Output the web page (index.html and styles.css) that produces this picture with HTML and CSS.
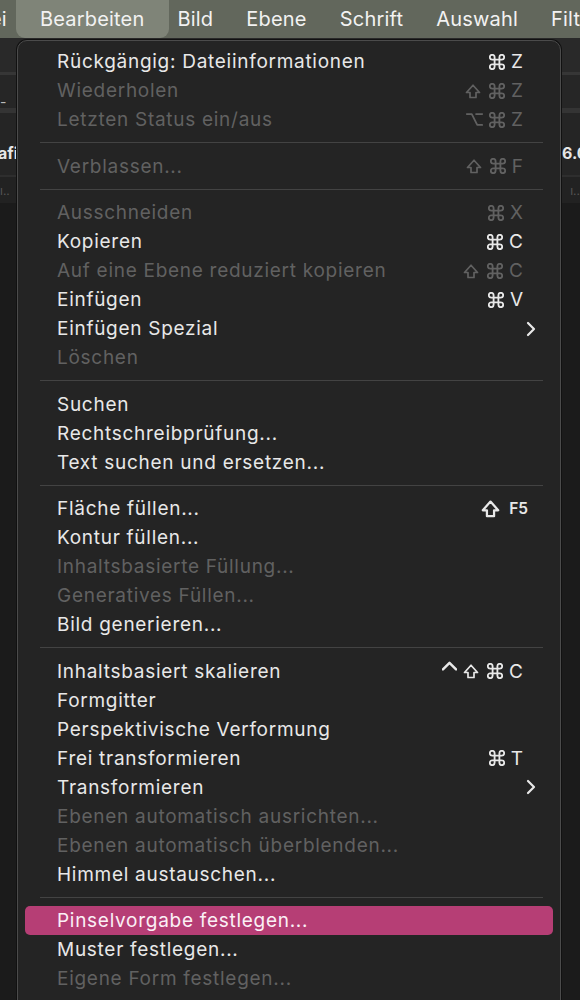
FILE: index.html
```html
<!DOCTYPE html>
<html lang="de">
<head>
<meta charset="utf-8">
<title>Bearbeiten</title>
<link rel="stylesheet" href="styles.css">
</head>
<body>
<div class="app">
  <nav class="menubar">
    <span class="mb-item first">ei</span>
    <span class="mb-item active">Bearbeiten</span>
    <span class="mb-item">Bild</span>
    <span class="mb-item">Ebene</span>
    <span class="mb-item">Schrift</span>
    <span class="mb-item">Auswahl</span>
    <span class="mb-item">Filter</span>
  </nav>
  <div class="bar bar1"></div>
  <div class="bar bar2"><span class="dash">-</span></div>
  <div class="bar bar3"><span class="bold">afi</span><span class="bold edge">6.0</span></div>
  <div class="bar bar4"><span class="ticks">ı..</span><span class="ticks">ı..</span></div>
  <div class="workspace"></div>
</div>

<div class="menu">
  <div class="item"><span class="label">Rückgängig: Dateiinformationen</span><span class="keys"><svg class="k cmd" viewBox="2 2 20 20"><path d="M15 6v12a3 3 0 1 0 3-3H6a3 3 0 1 0 3 3V6a3 3 0 1 0-3 3h12a3 3 0 1 0-3-3"/></svg><span class="ch">Z</span></span><span class="sub"></span></div>
  <div class="item off"><span class="label">Wiederholen</span><span class="keys"><svg class="k shift" viewBox="0 0 16 16"><path d="M5 14.5V9.5H1.5L8 2.2l6.5 7.3H11v5z"/></svg><svg class="k cmd" viewBox="2 2 20 20"><path d="M15 6v12a3 3 0 1 0 3-3H6a3 3 0 1 0 3 3V6a3 3 0 1 0-3 3h12a3 3 0 1 0-3-3"/></svg><span class="ch">Z</span></span><span class="sub"></span></div>
  <div class="item off"><span class="label">Letzten Status ein/aus</span><span class="keys"><svg class="k opt" viewBox="1 1 22 22"><path d="M2 5h6.5l7 14H22M14 5h8"/></svg><svg class="k cmd" viewBox="2 2 20 20"><path d="M15 6v12a3 3 0 1 0 3-3H6a3 3 0 1 0 3 3V6a3 3 0 1 0-3 3h12a3 3 0 1 0-3-3"/></svg><span class="ch">Z</span></span><span class="sub"></span></div>
  <div class="sep"></div>
  <div class="item off"><span class="label">Verblassen...</span><span class="keys"><svg class="k shift" viewBox="0 0 16 16"><path d="M5 14.5V9.5H1.5L8 2.2l6.5 7.3H11v5z"/></svg><svg class="k cmd" viewBox="2 2 20 20"><path d="M15 6v12a3 3 0 1 0 3-3H6a3 3 0 1 0 3 3V6a3 3 0 1 0-3 3h12a3 3 0 1 0-3-3"/></svg><span class="ch">F</span></span><span class="sub"></span></div>
  <div class="sep"></div>
  <div class="item off"><span class="label">Ausschneiden</span><span class="keys"><svg class="k cmd" viewBox="2 2 20 20"><path d="M15 6v12a3 3 0 1 0 3-3H6a3 3 0 1 0 3 3V6a3 3 0 1 0-3 3h12a3 3 0 1 0-3-3"/></svg><span class="ch">X</span></span><span class="sub"></span></div>
  <div class="item"><span class="label">Kopieren</span><span class="keys"><svg class="k cmd" viewBox="2 2 20 20"><path d="M15 6v12a3 3 0 1 0 3-3H6a3 3 0 1 0 3 3V6a3 3 0 1 0-3 3h12a3 3 0 1 0-3-3"/></svg><span class="ch">C</span></span><span class="sub"></span></div>
  <div class="item off"><span class="label">Auf eine Ebene reduziert kopieren</span><span class="keys"><svg class="k shift" viewBox="0 0 16 16"><path d="M5 14.5V9.5H1.5L8 2.2l6.5 7.3H11v5z"/></svg><svg class="k cmd" viewBox="2 2 20 20"><path d="M15 6v12a3 3 0 1 0 3-3H6a3 3 0 1 0 3 3V6a3 3 0 1 0-3 3h12a3 3 0 1 0-3-3"/></svg><span class="ch">C</span></span><span class="sub"></span></div>
  <div class="item"><span class="label">Einfügen</span><span class="keys"><svg class="k cmd" viewBox="2 2 20 20"><path d="M15 6v12a3 3 0 1 0 3-3H6a3 3 0 1 0 3 3V6a3 3 0 1 0-3 3h12a3 3 0 1 0-3-3"/></svg><span class="ch">V</span></span><span class="sub"></span></div>
  <div class="item"><span class="label">Einfügen Spezial</span><span class="keys"></span><span class="sub"><svg class="chev" viewBox="0 0 10 16"><path d="M2 2l6 6-6 6"/></svg></span></div>
  <div class="item off"><span class="label">Löschen</span><span class="keys"></span><span class="sub"></span></div>
  <div class="sep"></div>
  <div class="item"><span class="label">Suchen</span><span class="keys"></span><span class="sub"></span></div>
  <div class="item"><span class="label">Rechtschreibprüfung...</span><span class="keys"></span><span class="sub"></span></div>
  <div class="item"><span class="label">Text suchen und ersetzen...</span><span class="keys"></span><span class="sub"></span></div>
  <div class="sep"></div>
  <div class="item"><span class="label">Fläche füllen...</span><span class="keys fkey"><svg class="k shift big" viewBox="0 0 16 16"><path d="M5 14.5V9.5H1.5L8 2.2l6.5 7.3H11v5z"/></svg><span class="ch small">F5</span></span><span class="sub"></span></div>
  <div class="item"><span class="label">Kontur füllen...</span><span class="keys"></span><span class="sub"></span></div>
  <div class="item off"><span class="label">Inhaltsbasierte Füllung...</span><span class="keys"></span><span class="sub"></span></div>
  <div class="item off"><span class="label">Generatives Füllen...</span><span class="keys"></span><span class="sub"></span></div>
  <div class="item"><span class="label">Bild generieren...</span><span class="keys"></span><span class="sub"></span></div>
  <div class="sep"></div>
  <div class="item"><span class="label">Inhaltsbasiert skalieren</span><span class="keys"><svg class="k ctrl" viewBox="4 4 16 16"><path d="M5 13l7-7 7 7"/></svg><svg class="k shift" viewBox="0 0 16 16"><path d="M5 14.5V9.5H1.5L8 2.2l6.5 7.3H11v5z"/></svg><svg class="k cmd" viewBox="2 2 20 20"><path d="M15 6v12a3 3 0 1 0 3-3H6a3 3 0 1 0 3 3V6a3 3 0 1 0-3 3h12a3 3 0 1 0-3-3"/></svg><span class="ch">C</span></span><span class="sub"></span></div>
  <div class="item"><span class="label">Formgitter</span><span class="keys"></span><span class="sub"></span></div>
  <div class="item"><span class="label">Perspektivische Verformung</span><span class="keys"></span><span class="sub"></span></div>
  <div class="item"><span class="label">Frei transformieren</span><span class="keys"><svg class="k cmd" viewBox="2 2 20 20"><path d="M15 6v12a3 3 0 1 0 3-3H6a3 3 0 1 0 3 3V6a3 3 0 1 0-3 3h12a3 3 0 1 0-3-3"/></svg><span class="ch">T</span></span><span class="sub"></span></div>
  <div class="item"><span class="label">Transformieren</span><span class="keys"></span><span class="sub"><svg class="chev" viewBox="0 0 10 16"><path d="M2 2l6 6-6 6"/></svg></span></div>
  <div class="item off"><span class="label">Ebenen automatisch ausrichten...</span><span class="keys"></span><span class="sub"></span></div>
  <div class="item off"><span class="label">Ebenen automatisch überblenden...</span><span class="keys"></span><span class="sub"></span></div>
  <div class="item"><span class="label">Himmel austauschen...</span><span class="keys"></span><span class="sub"></span></div>
  <div class="sep"></div>
  <div class="item hl"><span class="label">Pinselvorgabe festlegen...</span><span class="keys"></span><span class="sub"></span></div>
  <div class="item"><span class="label">Muster festlegen...</span><span class="keys"></span><span class="sub"></span></div>
  <div class="item off"><span class="label">Eigene Form festlegen...</span><span class="keys"></span><span class="sub"></span></div>
</div>
</body>
</html>
```

FILE: styles.css
```css
* { box-sizing: border-box; }
html, body {
  margin: 0;
  padding: 0;
  width: 580px;
  height: 1000px;
  overflow: hidden;
  background: #1b1b1b;
  font-family: Inter, "Liberation Sans", sans-serif;
}
.app {
  display: flex;
  flex-direction: column;
  height: 1000px;
}
.menubar {
  height: 38px;
  flex: none;
  display: flex;
  align-items: center;
  gap: 33px;
  background: #62675c;
  color: #f2f2f2;
  font-size: 20px;
  letter-spacing: 0.2px;
  white-space: nowrap;
  overflow: hidden;
}
.mb-item {
  line-height: 38px;
}
.mb-item.first { margin-left: -10px; }
.active {
  background: #7f8478;
  border-radius: 0 0 9px 9px;
  padding: 0 24px;
  margin: 0 -24px;
}
.bar {
  flex: none;
  display: flex;
  justify-content: space-between;
  align-items: center;
  color: #e6e6e6;
  white-space: nowrap;
}
.bar1 { height: 37px; background: #292929; border-bottom: 3px solid #363636; }
.bar2 { height: 38px; background: #262626; border-bottom: 5px solid #343434; }
.bar3 { height: 64px; background: #252525; border-bottom: 2px solid #2e2e2e; padding-top: 18px; }
.bar4 { height: 26px; background: #222; }
.workspace { flex: 1; background: #1b1b1b; }
.dash { font-size: 14px; color: #bbb; padding-top: 20px; }
.bold { font-weight: 700; font-size: 16px; }
.bar3 .bold:first-child { margin-left: -2px; }
.edge { width: 18px; overflow: hidden; }
.ticks { font-size: 12px; color: #555; }

.menu {
  position: absolute;
  left: 17px;
  top: 40px;
  width: 544px;
  height: 1000px;
  background: #242424;
  border: 1px solid #4b4b4b;
  border-radius: 10px;
  padding: 6px 7px;
  box-shadow: 0 0 0 1px #111;
}
.item {
  height: 29px;
  display: flex;
  align-items: center;
  padding: 0 17px 0 32px;
  color: #e8e8e8;
  font-size: 19px;
  letter-spacing: 0.72px;
  border-radius: 5px;
  white-space: nowrap;
}
.item.off { color: #616161; }
.item.hl { background: #b63e75; color: #fbf0f5; }
.label { flex: 1; }
.keys {
  display: flex;
  align-items: center;
  gap: 6px;
  letter-spacing: 0;
}
.k {
  width: 16px;
  height: 16px;
  fill: none;
  stroke: currentColor;
  stroke-width: 2.3;
  stroke-linejoin: round;
  stroke-linecap: round;
}
.k.shift { width: 16px; height: 16px; stroke-width: 1.7; margin-right: 2px; }
.k.shift.big { width: 19px; height: 19px; stroke-width: 1.9; margin-right: 3px; }
.k.opt { width: 17px; height: 17px; }
.k.ctrl { width: 15px; height: 15px; margin-top: -5px; margin-right: 0; stroke-width: 2.6; }
.ch { font-size: 19px; line-height: 1; }
.ch.small { font-size: 15.5px; font-weight: 600; }
.fkey { margin-right: -5px; }
.sub {
  width: 13px;
  display: flex;
  justify-content: flex-end;
}
.chev {
  width: 10px;
  height: 16px;
  fill: none;
  stroke: currentColor;
  stroke-width: 2.2;
  stroke-linecap: round;
  stroke-linejoin: round;
}
.sep {
  height: 1px;
  margin: 8px 10px 8.5px 15px;
  background: #434343;
}
```
